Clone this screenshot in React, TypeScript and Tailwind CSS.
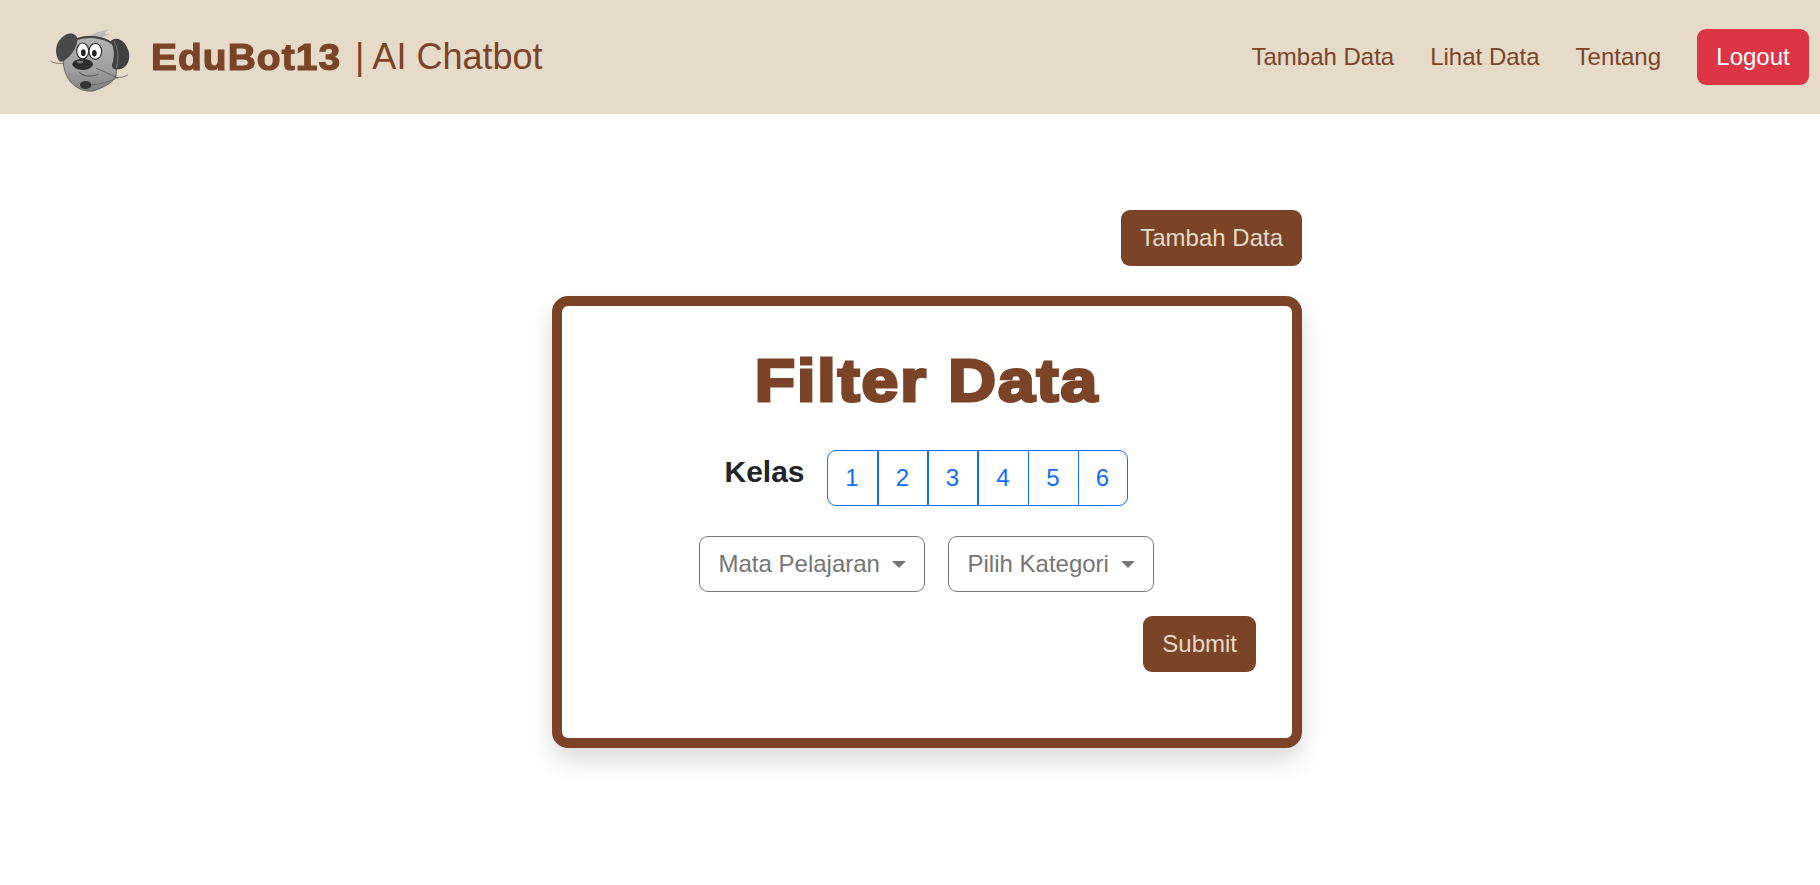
import React from 'react';

const kelasList = [
  { label: '1', cls: 'w-[51px] border-r-2' },
  { label: '2', cls: 'w-[50px] border-r-2' },
  { label: '3', cls: 'w-[50px] border-r-2' },
  { label: '4', cls: 'w-[50px] border-r' },
  { label: '5', cls: 'w-[50px] border-r' },
  { label: '6', cls: 'w-[48px]' },
];

function DogLogo() {
  return (
    <svg width="100" height="85" viewBox="0 0 300 255" className="shrink-0">
      <defs>
        <filter id="soft">
          <feGaussianBlur stdDeviation="1.6" />
        </filter>
        <linearGradient id="face" x1="0" y1="0" x2="0" y2="1">
          <stop offset="0" stopColor="#b4b4b4" />
          <stop offset="0.6" stopColor="#a0a0a0" />
          <stop offset="1" stopColor="#808080" />
        </linearGradient>
      </defs>
      <g filter="url(#soft)">
        <path d="M146 68 C158 52 178 52 206 42 L194 56 L210 58 L190 66 L198 78 L160 78 Z" fill="#bdbdbd" />
        <path d="M32 139 C45 146 60 147 80 143" fill="none" stroke="#666" strokeWidth="2.5" />
        <path d="M224 186 C236 188 250 188 264 179" fill="none" stroke="#666" strokeWidth="2.5" />
        <path
          d="M108 72 C140 58 190 62 216 84 C228 110 232 150 228 182 C222 202 190 218 160 228 C128 232 98 214 84 190 C72 170 66 140 72 112 C80 92 92 80 108 72 Z"
          fill="url(#face)"
          stroke="#555"
          strokeWidth="2.5"
        />
        <path d="M106 74 C140 60 190 64 220 88" fill="none" stroke="#444" strokeWidth="6" />
        <path d="M54 132 C42 108 48 76 76 60 C94 50 114 58 112 76 C110 100 94 122 72 138 C64 142 58 140 54 132 Z" fill="#4a4a4a" />
        <path d="M212 78 C234 58 262 84 267 114 C271 140 258 160 238 163 C224 165 214 160 216 150 C224 124 224 100 212 78 Z" fill="#3f3f3f" />
        <path d="M222 78 C234 100 238 132 228 160" fill="none" stroke="#7a7a7a" strokeWidth="3" />
        <ellipse cx="128" cy="108" rx="18" ry="24" fill="#fff" stroke="#2e2e2e" strokeWidth="3.5" />
        <ellipse cx="166" cy="109" rx="19" ry="24" fill="#fff" stroke="#2e2e2e" strokeWidth="3.5" />
        <ellipse cx="130" cy="113" rx="7" ry="10" fill="#222" />
        <ellipse cx="163" cy="115" rx="7" ry="10" fill="#222" />
        <ellipse cx="128" cy="148" rx="31" ry="17" fill="#2e2e2e" />
        <ellipse cx="120" cy="141" rx="10" ry="4" fill="#777" />
        <path d="M118 172 C130 184 152 188 176 177" fill="none" stroke="#444" strokeWidth="2.5" />
        <path d="M168 160 C190 168 210 178 234 190" fill="none" stroke="#555" strokeWidth="2.5" />
        <path d="M150 210 C180 208 210 200 232 188" fill="none" stroke="#666" strokeWidth="2.5" />
        <ellipse cx="137" cy="210" rx="17" ry="12" fill="#333" />
      </g>
    </svg>
  );
}

function BrownButton({ label }: { label: string }) {
  return (
    <button className="h-14 rounded-[9px] bg-[#7b4429] px-[19px] text-[24px] leading-none text-[#e6dbc8]">
      {label}
    </button>
  );
}

function SelectButton({ label, width }: { label: string; width: string }) {
  return (
    <button
      className={`flex h-14 items-center justify-between rounded-[9px] border border-[#777777] pl-[19px] pr-[18px] text-[24px] leading-none text-[#757575] ${width}`}
    >
      {label}
      <span className="h-0 w-0 border-x-[7px] border-t-[7px] border-x-transparent border-t-[#757575]"></span>
    </button>
  );
}

export default function App() {
  return (
    <div className="min-h-[885px] bg-white font-['Liberation_Sans',Arial,sans-serif]">
      <nav className="flex h-[114px] items-center justify-between bg-[#e6dbc8] pl-[40px] pr-[11px] text-[#7b4429]">
        <div className="flex items-center">
          <DogLogo />
          <span className="ml-[11px] mt-[2px] w-[188px] origin-left scale-x-[1.08] whitespace-nowrap text-[36px] font-bold tracking-[1px] [-webkit-text-stroke:1.2px_#7b4429]">
            EduBot13
          </span>
          <span className="ml-[16px] text-[36px]">| AI Chatbot</span>
        </div>
        <div className="flex items-center text-[24px]">
          <a className="mr-[36px]">Tambah Data</a>
          <a className="mr-[36px]">Lihat Data</a>
          <a className="mr-[36px]">Tentang</a>
          <button className="h-14 w-[112px] rounded-[9px] bg-[#dc3545] text-white">Logout</button>
        </div>
      </nav>

      <main className="ml-[552px] flex w-[750px] flex-col pt-[96px]">
        <div className="flex justify-end">
          <BrownButton label="Tambah Data" />
        </div>
        <section className="mt-[30px] flex h-[452px] flex-col rounded-[16px] border-[10px] border-[#7b4429] bg-white shadow-[0_12px_24px_rgba(0,0,0,0.15)]">
          <h1 className="mt-[39px] scale-x-[1.1] text-center text-[60px] leading-[72px] font-bold tracking-[1.8px] text-[#7b4429] [-webkit-text-stroke:3px_#7b4429]">
            Filter Data
          </h1>
          <div className="mt-[33px] flex justify-center gap-[22px] pr-[2px]">
            <label className="pt-[4px] text-[30px] leading-[36px] font-bold text-[#212529]">Kelas</label>
            <div className="flex h-14 overflow-hidden rounded-[9px] border border-[#0d6efd]">
              {kelasList.map((kelas) => (
                <button key={kelas.label} className={`${kelas.cls} border-[#0d6efd] text-[24px] text-[#0d6efd]`}>
                  {kelas.label}
                </button>
              ))}
            </div>
          </div>
          <div className="mt-[30px] flex justify-center gap-[23px] pr-[2px]">
            <SelectButton label="Mata Pelajaran" width="w-[226px]" />
            <SelectButton label="Pilih Kategori" width="w-[206px]" />
          </div>
          <div className="mt-[24px] flex justify-end pr-[36px]">
            <BrownButton label="Submit" />
          </div>
        </section>
      </main>
    </div>
  );
}
